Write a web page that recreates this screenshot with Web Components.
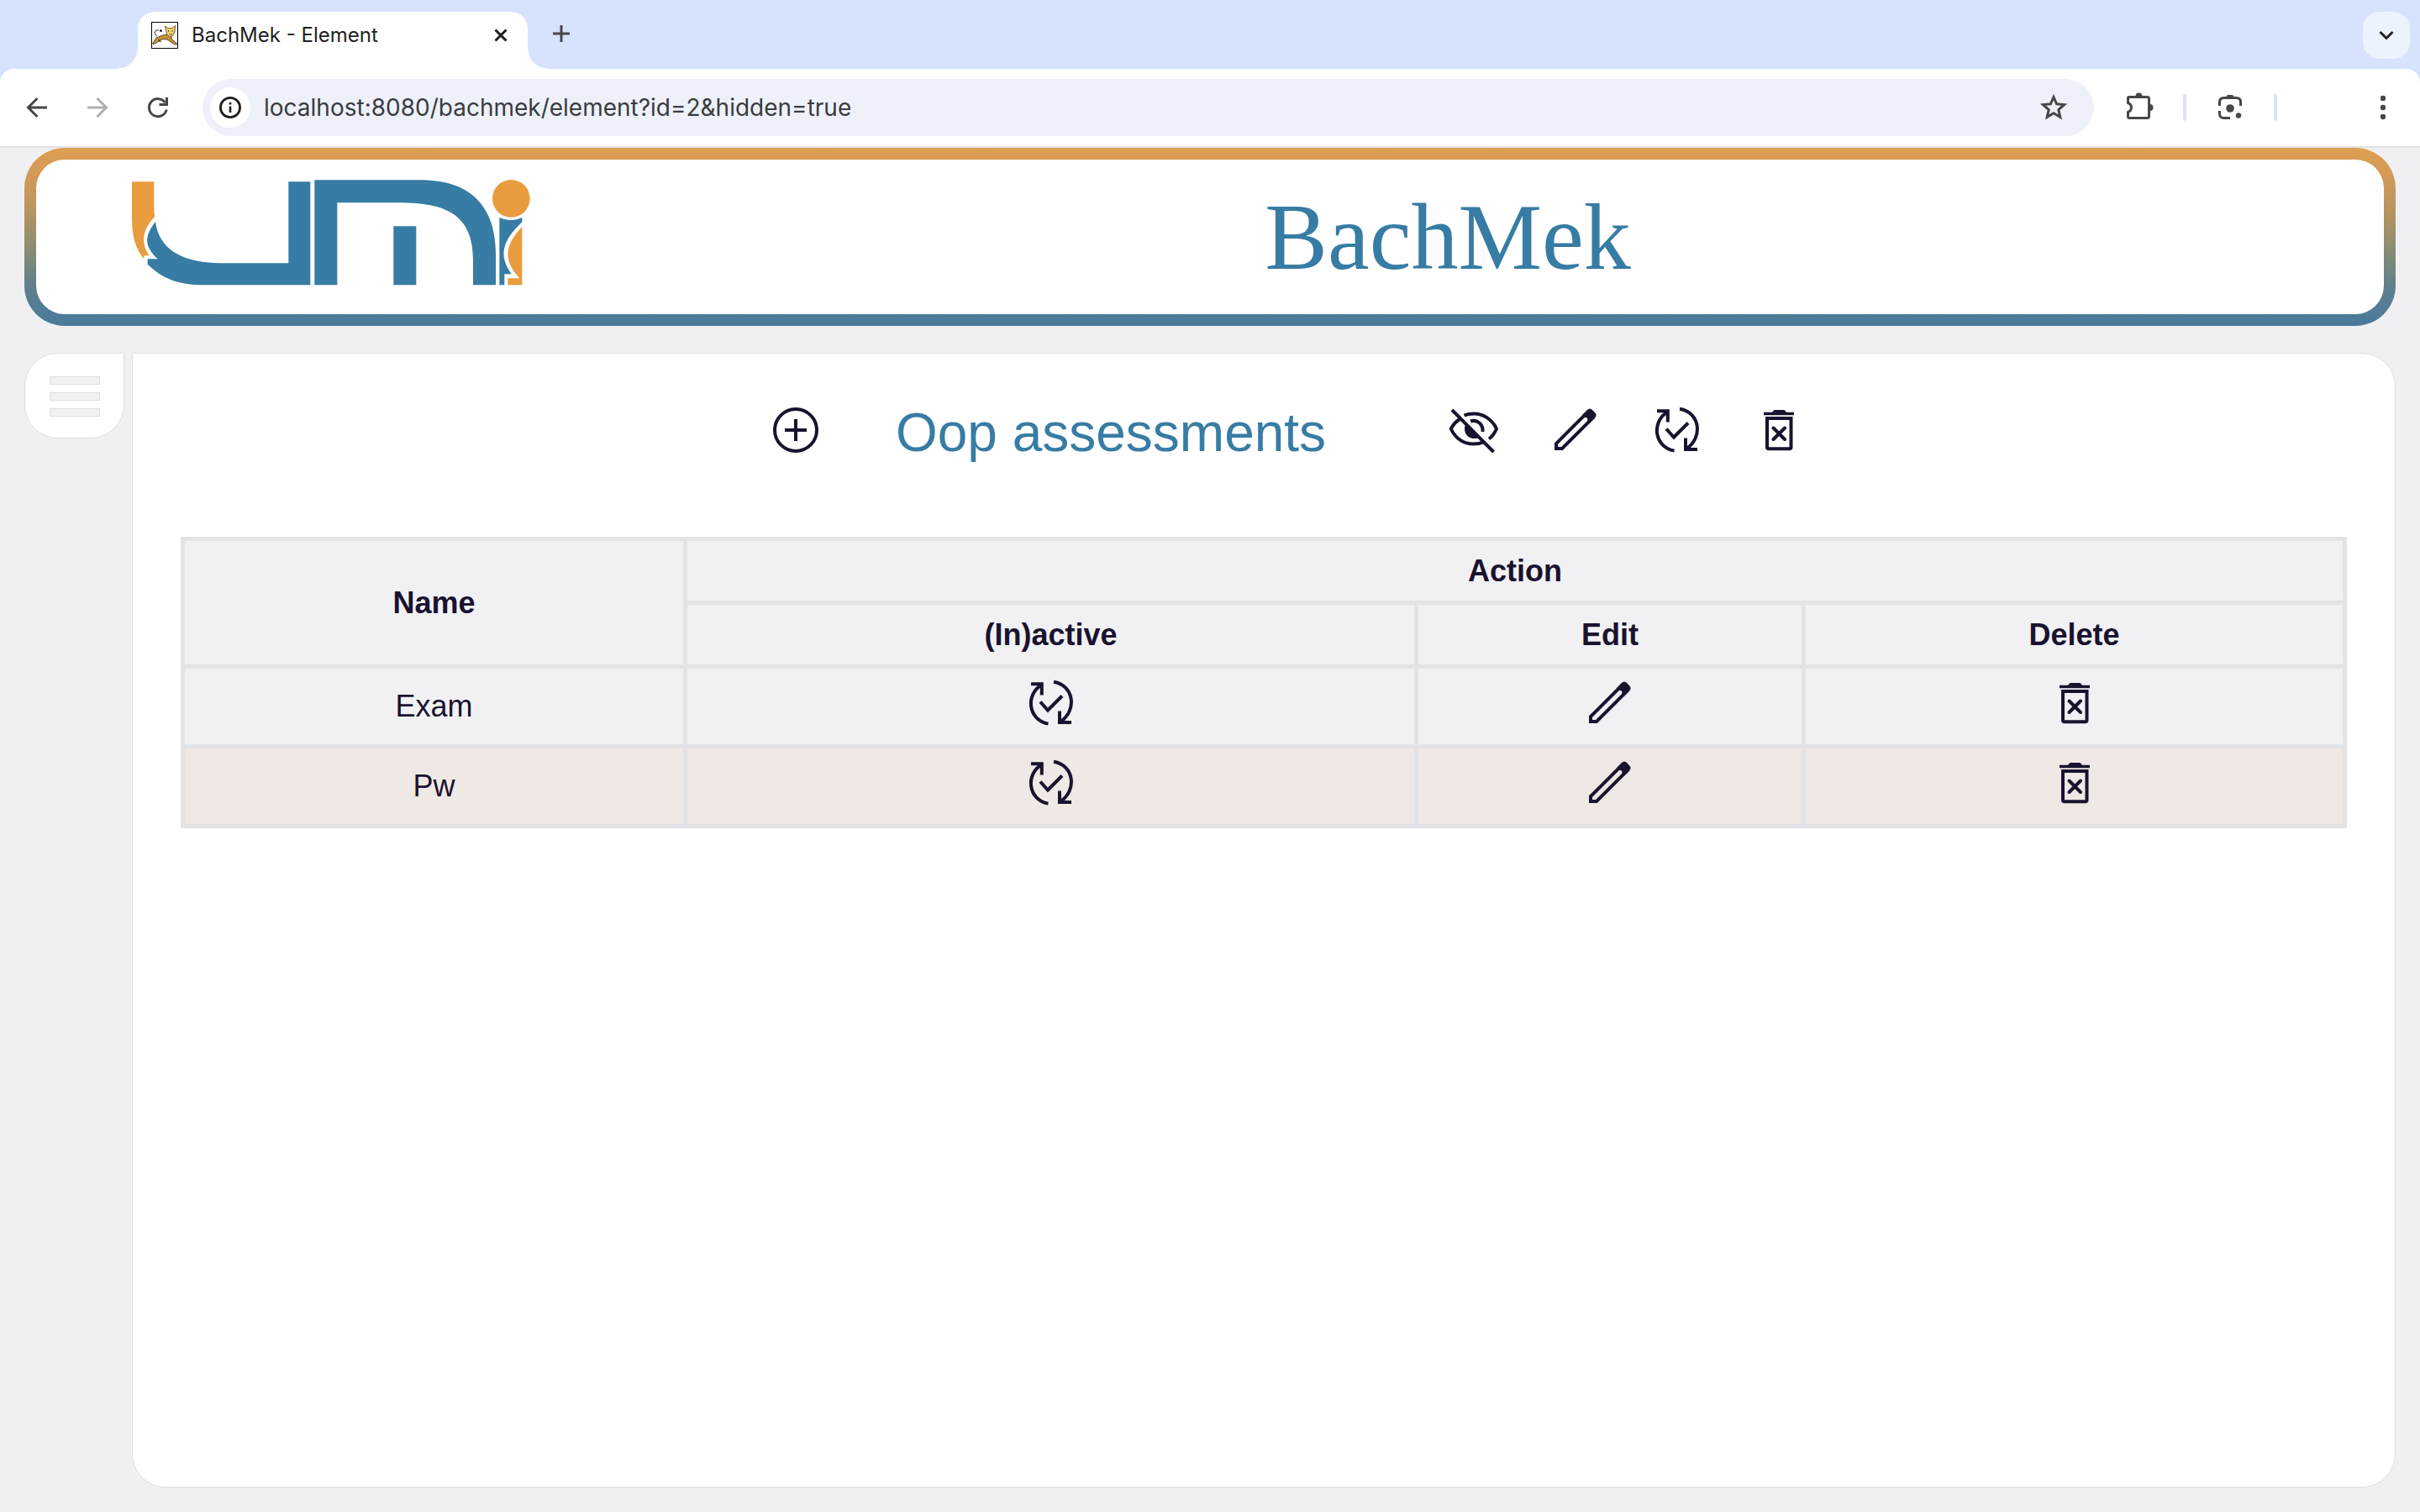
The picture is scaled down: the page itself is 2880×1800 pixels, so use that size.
<!DOCTYPE html>
<html lang="en">
<head>
<meta charset="utf-8">
<title>BachMek - Element</title>
<style>
  html, body { margin: 0; height: 100%; }
  body {
    display: flex;
    flex-direction: column;
    background: #f0f0f3;
    color: #19132f;
    font-family: "Liberation Sans", Arial, sans-serif;
    font-size: 36px;
  }
  app-shell { flex: 1; }
</style>
</head>
<body>
<browser-tabs>BachMek - Element</browser-tabs>
<browser-toolbar url="localhost:8080/bachmek/element?id=2&amp;hidden=true"></browser-toolbar>
<app-shell>
  <app-banner slot="banner">BachMek</app-banner>
  <menu-button slot="menu"></menu-button>
  <title-bar>
    <icon-button slot="before" name="add" label="Add assessment"></icon-button>
    Oop assessments
    <icon-button slot="after" name="hide" label="Hide inactive"></icon-button>
    <icon-button slot="after" name="edit" label="Edit element"></icon-button>
    <icon-button slot="after" name="toggle" label="Activate or deactivate element"></icon-button>
    <icon-button slot="after" name="remove" label="Delete element"></icon-button>
  </title-bar>
  <assessment-table items="Exam,Pw"></assessment-table>
</app-shell>

<script>
const define = (name, html, setup) => {
  const template = document.createElement('template');
  template.innerHTML = html;
  customElements.define(name, class extends HTMLElement {
    constructor() {
      super();
      this.attachShadow({ mode: 'open' }).append(template.content.cloneNode(true));
    }
    connectedCallback() {
      if (setup && !this.ready) { this.ready = true; setup(this, this.shadowRoot); }
    }
  });
};

/* Page icons, on a 64 x 64 grid */
const ICONS = {
  add: `<circle cx="32" cy="32" r="25"/><path d="M32 19v26M19 32h26"/>`,
  hide: `<path d="M6 8l49.500 50"/>
    <path d="M20.500 14.500C24 13 28 12.400 32 12.400C43 12.400 53.500 19 59 30.500C56.800 35.500 54 39.500 50 42.500"/>
    <path d="M15.500 18.700C11 21.500 7 26 4.800 30.500C10 42 20 48.600 31.500 48.600C36 48.600 40 48 43.500 46.300"/>
    <path d="M28 21.500C36 19 43.500 25 42.400 34"/>
    <path d="M22.500 24.500L38.500 40.500C32 44.500 21 41 21 30.500C21 28 21.500 26 22.500 24.500Z" fill="currentColor" stroke="none"/>`,
  edit: `<path d="M9 54v-6L46 11L52.500 17.500L16 54Z"/>
    <path d="M40 14L46 8Q49 5 52 8L55.300 11.500Q58 14.500 55 17.500L49 23.500L46 20.500Q47.500 17 43.500 17Z" fill="currentColor" stroke="none"/>`,
  toggle: `<path d="M8 9.300H20.800V22.500"/><path d="M20.200 10.500C1.500 22 4 52 28.500 56.600"/>
    <path d="M35 6.700C59.700 11 62.700 41 43.200 54"/><path d="M42 41.500V55H56"/>
    <path d="M19 30.500L28 40.500L45 23.500"/>`,
  remove: `<path d="M14 10.700H24L26.500 8H38.500L41 10.700H50V14.300H14Z" fill="currentColor" stroke="none"/>
    <path d="M18 18H46.500V52.500Q46.500 54.300 44.500 54.300H20Q18 54.300 18 52.500Z"/>
    <path d="M25.500 29.500L39 43M39 29.500L25.500 43" stroke-linecap="round"/>`
};

define('icon-button', `
  <style>
    :host { display: block; width: 64px; height: 64px; }
    button { display: block; padding: 0; border: 0; background: none; color: inherit; cursor: pointer; }
    svg { display: block; width: 64px; height: 64px; fill: none; stroke: currentColor; stroke-width: 4; }
  </style>
  <button type="button"><svg viewBox="0 0 64 64" aria-hidden="true"></svg></button>`,
  (host, root) => {
    root.querySelector('button').setAttribute('aria-label', host.getAttribute('label'));
    root.querySelector('svg').innerHTML = ICONS[host.getAttribute('name')];
  });

define('browser-tabs', `
  <style>
    :host { display: flex; align-items: flex-end; height: 82px; padding: 0 12px 0 140px; background: #d7e2fc;
      font-family: Inter, "Noto Sans", sans-serif; font-size: 24px; color: #1f1f1f; }
    .flare { width: 24px; height: 24px; background: radial-gradient(circle at 0 0, #d7e2fc 23px, #fff 24px); }
    .flare.end { background: radial-gradient(circle at 100% 0, #d7e2fc 23px, #fff 24px); }
    .tab { display: flex; align-items: center; box-sizing: border-box; width: 464px; height: 68px; padding: 0 20px 12px 16px;
      border-radius: 20px 20px 0 0; background: #fff; }
    .title { flex: 1; margin-left: 16px; line-height: 28px; white-space: nowrap; }
    button { display: flex; align-items: center; justify-content: center; padding: 0; border: 0; background: none; color: inherit; }
    .close { width: 24px; height: 24px; }
    .new { width: 32px; height: 32px; margin-bottom: 26px; color: #474747; }
    .list { width: 56px; height: 56px; margin: 0 0 12px auto; border-radius: 20px; background: #edf3fc; }
    svg { display: block; fill: none; stroke: currentColor; stroke-width: 3; }
  </style>
  <span class="flare"></span>
  <div class="tab">
    <svg width="32" height="32" viewBox="0 0 32 32" aria-hidden="true" stroke-width="1">
      <rect x=".5" y=".5" width="31" height="31" fill="#fff" stroke="#000" stroke-width="1"/>
      <path d="M7 17C2 14 4 9 9 10" stroke="#222" stroke-width="1"/><circle cx="11.500" cy="10.500" r="1.500" fill="#222" stroke="none"/>
      <path d="M1.500 26L6 19L14 16L19 15L24 17V20L31 26.500L28 27L19 21L14 20.500L9 23L3 26.500Z" fill="#c8923c" stroke="#5b431d" stroke-width="1"/>
      <path d="M8 20l4 4-2.500-.5z" fill="#111" stroke="none"/>
      <path d="M16.500 5L20 7.500H25L28.500 4.500L28 12L25.500 16.500L22 18L18.500 15Z" fill="#f0d067" stroke="#7a6425" stroke-width="1"/>
      <path d="M20.500 10v2M25 10v2M21 14.500l2 1 2-1" stroke="#4e6070" stroke-width="1"/>
    </svg>
    <span class="title"><slot></slot></span>
    <button class="close" type="button" aria-label="Close tab"><svg width="24" height="24" viewBox="0 0 24 24"><path d="M5.500 5.500l13 13M18.500 5.500l-13 13"/></svg></button>
  </div>
  <span class="flare end"></span>
  <button class="new" type="button" aria-label="New tab"><svg width="32" height="32" viewBox="0 0 32 32"><path d="M16 6v20M6 16h20"/></svg></button>
  <button class="list" type="button" aria-label="Search tabs"><svg width="24" height="24" viewBox="0 0 24 24"><path d="M4.500 8l7.500 7.500L19.500 8"/></svg></button>`);

define('browser-toolbar', `
  <style>
    :host { display: block; background: #d7e2fc; font-family: Inter, "Noto Sans", sans-serif; font-size: 28px; color: #474747; }
    .bar { display: flex; align-items: center; box-sizing: border-box; height: 94px; padding: 0 24px 0 24px;
      border-bottom: 2px solid #e2e3e3; border-radius: 16px 16px 0 0; background: #fff; }
    button { display: block; padding: 0; border: 0; background: none; color: inherit; }
    .nav { display: flex; gap: 32px; margin-right: 33px; }
    .next { color: #b0b0b0; }
    .address { flex: 1; display: flex; align-items: center; box-sizing: border-box; height: 68px; padding: 0 28px 0 9px;
      border-radius: 34px; background: #eef1fa; }
    .info { display: flex; align-items: center; justify-content: center; width: 48px; height: 48px; border-radius: 50%; background: #fff; color: #1f1f1f; }
    input { flex: 1; min-width: 0; height: 40px; margin-left: 16px; padding: 0; border: 0; outline: 0; font: inherit; color: #3a3c3f; background: none; }
    .tools { display: flex; align-items: center; gap: 32px; margin-left: 34px; }
    .sep { width: 4px; height: 32px; border-radius: 2px; background: #d7e2fc; }
    .more { margin-left: 74px; }
    svg { display: block; fill: none; stroke: currentColor; stroke-width: 3; }
    .solid { fill: currentColor; stroke: none; }
  </style>
  <div class="bar">
    <div class="nav">
      <button type="button" aria-label="Back"><svg width="40" height="40" viewBox="0 0 40 40"><path d="M32 20H10M20.500 9L9.500 20l11 11"/></svg></button>
      <button type="button" aria-label="Forward" class="next"><svg width="40" height="40" viewBox="0 0 40 40"><path d="M8 20h22M19.500 9l11 11-11 11"/></svg></button>
      <button type="button" aria-label="Reload"><svg width="40" height="40" viewBox="0 0 40 40"><path d="M30.200 22.500A10.500 10.500 0 1 1 28.500 14"/><path d="M21.500 16.500H30.500V8"/></svg></button>
    </div>
    <div class="address">
      <button class="info" type="button" aria-label="Site information"><svg width="32" height="32" viewBox="0 0 32 32"><circle cx="16" cy="16" r="11.600" stroke-width="2.800"/><path d="M16 14.500v7.500M16 9.800v2.800" stroke-width="2.600"/></svg></button>
      <input type="text" aria-label="Address" spellcheck="false">
      <button type="button" aria-label="Bookmark"><svg width="40" height="40" viewBox="0 0 40 40"><path d="M20 7.500l3.600 8.300 9 .8-6.800 6 2 8.800-7.800-4.600-7.800 4.600 2-8.800-6.800-6 9-.8z"/></svg></button>
    </div>
    <div class="tools">
      <button type="button" aria-label="Extensions"><svg width="40" height="40" viewBox="0 0 40 40">
        <path d="M6.500 8.500Q6.500 7.500 7.500 7.500H29.500Q31.500 7.500 31.500 9.500V30.500Q31.500 32.500 29.500 32.500H8Q6.500 32.500 6.500 30.500V25.500Q10.500 24 10.500 20Q10.500 16 6.500 14.500Z"/>
        <path class="solid" d="M15.500 6.500a4 4 0 0 1 8 0zM32.500 16a4 4 0 0 1 0 8z"/></svg></button>
      <span class="sep"></span>
      <button type="button" aria-label="Search with Lens"><svg width="40" height="40" viewBox="0 0 40 40">
        <path d="M7.500 18V13.500Q7.500 8.500 12.500 8.500H27.500Q32.500 8.500 32.500 13.500V18M7.500 24V27.500Q7.500 32.500 12.500 32.500H20"/>
        <path class="solid" d="M14.500 8l2.500-3h6l2.500 3z"/><circle class="solid" cx="20" cy="21" r="4.800"/><circle class="solid" cx="30" cy="29.500" r="3.200"/></svg></button>
      <span class="sep"></span>
      <button type="button" aria-label="More" class="more"><svg width="40" height="40" viewBox="0 0 40 40"><g class="solid"><circle cx="20" cy="9" r="3.200"/><circle cx="20" cy="20" r="3.200"/><circle cx="20" cy="31" r="3.200"/></g></svg></button>
    </div>
  </div>`,
  (host, root) => { root.querySelector('input').value = host.getAttribute('url'); });

define('app-shell', `
  <style>
    :host { display: flex; flex-direction: column; gap: 32px; padding: 0 29px 29px; }
    .body { flex: 1; display: flex; align-items: flex-start; gap: 9px; }
    main { flex: 1; align-self: stretch; box-sizing: border-box; padding: 59px 57px; border: 1px solid #dfdfe2;
      border-radius: 0 40px 40px 40px; background: #fff; }
  </style>
  <slot name="banner"></slot>
  <div class="body">
    <slot name="menu"></slot>
    <main><slot></slot></main>
  </div>`);

define('app-banner', `
  <style>
    :host { display: block; padding: 14px; border-radius: 48px;
      background: linear-gradient(#de9e51, #d49a57 14%, #b8955f 35%, #8c8e71 55%, #61808a 77%, #547d96 88%, #4a799b); }
    header { display: flex; align-items: center; height: 184px; padding: 0 22px 0 114px; border-radius: 34px; background: #fff; }
    svg { display: block; width: 474px; height: 126px; margin-bottom: 10px; }
    h1 { flex: 1; margin: 0; text-align: center; font-family: "Liberation Serif", "Times New Roman", serif;
      font-weight: 400; font-size: 112px; line-height: 128px; color: #377ca4; }
  </style>
  <header>
    <svg viewBox="50 131 1422 378" role="img" aria-label="UMI">
      <g fill="#377ca4">
        <path d="M609 138H687V507H310C210 507 155 480 106 433V414H142C95 368 92 335 134 281C148 385 235 429 380 429H609Z"/>
        <path d="M702 132H1080C1260 132 1349 225 1349 400V507H1268V420C1268 270 1190 213 1010 213H783V507H702Z"/>
        <path d="M984 297H1065V507H984Z"/>
        <path d="M1362 266Q1403 286 1443 266V282C1372 350 1358 400 1405 468H1380V507H1362Z"/>
      </g>
      <g fill="#e99c3e">
        <path d="M50 138H129V235Q129 250 132 262C90 305 78 355 112 402H93V414C62 378 50 330 50 270Z"/>
        <circle cx="1404" cy="198" r="67"/>
        <path d="M1443 298V507H1392V483H1434C1378 420 1376 370 1443 298Z"/>
      </g>
    </svg>
    <h1><slot></slot></h1>
  </header>`);

define('menu-button', `
  <style>
    :host { display: block; }
    button { display: flex; flex-direction: column; align-items: center; justify-content: center; gap: 9px; width: 119px; height: 102px;
      padding: 2px 0 0; border: 1px solid #dfdfe2; border-radius: 40px 0 40px 40px; background: #fff; }
    span { box-sizing: border-box; width: 60px; height: 10px; border: 1px solid #e0e0e5; background: #f1f1f3; }
  </style>
  <button type="button" aria-label="Menu"><span></span><span></span><span></span></button>`);

define('title-bar', `
  <style>
    :host { display: flex; justify-content: center; align-items: flex-start; margin-bottom: 92px; padding-left: 56px; }
    h2 { margin: 3px 144px 0 87px; font-weight: 400; font-size: 64px; line-height: 64px; color: #377ca4; white-space: nowrap; }
    .after { display: flex; gap: 57px; }
  </style>
  <slot name="before"></slot>
  <h2><slot></slot></h2>
  <div class="after"><slot name="after"></slot></div>`);

define('assessment-table', `
  <style>
    :host { display: block; }
    table { width: 100%; table-layout: fixed; border-collapse: collapse; background: #f1f1f4; line-height: 41px; text-align: center; }
    th, td { border: 5px solid #e2e3e6; }
    th { padding: 15px 0; }
    td { padding: 9px 0 17px; }
    td:first-child { padding: 0 0 2px; }
    tbody tr:nth-child(even) { background: #f0e8e4; }
    icon-button { margin: 0 auto; }
    .name { width: 598px; } .active { width: 870px; } .edit { width: 461px; } .delete { width: 644px; }
  </style>
  <table>
    <colgroup><col class="name"><col class="active"><col class="edit"><col class="delete"></colgroup>
    <thead>
      <tr><th rowspan="2" scope="col">Name</th><th colspan="3" scope="colgroup">Action</th></tr>
      <tr><th scope="col">(In)active</th><th scope="col">Edit</th><th scope="col">Delete</th></tr>
    </thead>
    <tbody></tbody>
  </table>`,
  (host, root) => {
    root.querySelector('tbody').innerHTML = host.getAttribute('items').split(',').map(name => `
      <tr><td>${name}</td>
        <td><icon-button name="toggle" label="Activate or deactivate ${name}"></icon-button></td>
        <td><icon-button name="edit" label="Edit ${name}"></icon-button></td>
        <td><icon-button name="remove" label="Delete ${name}"></icon-button></td></tr>`).join('');
  });
</script>
</body>
</html>
